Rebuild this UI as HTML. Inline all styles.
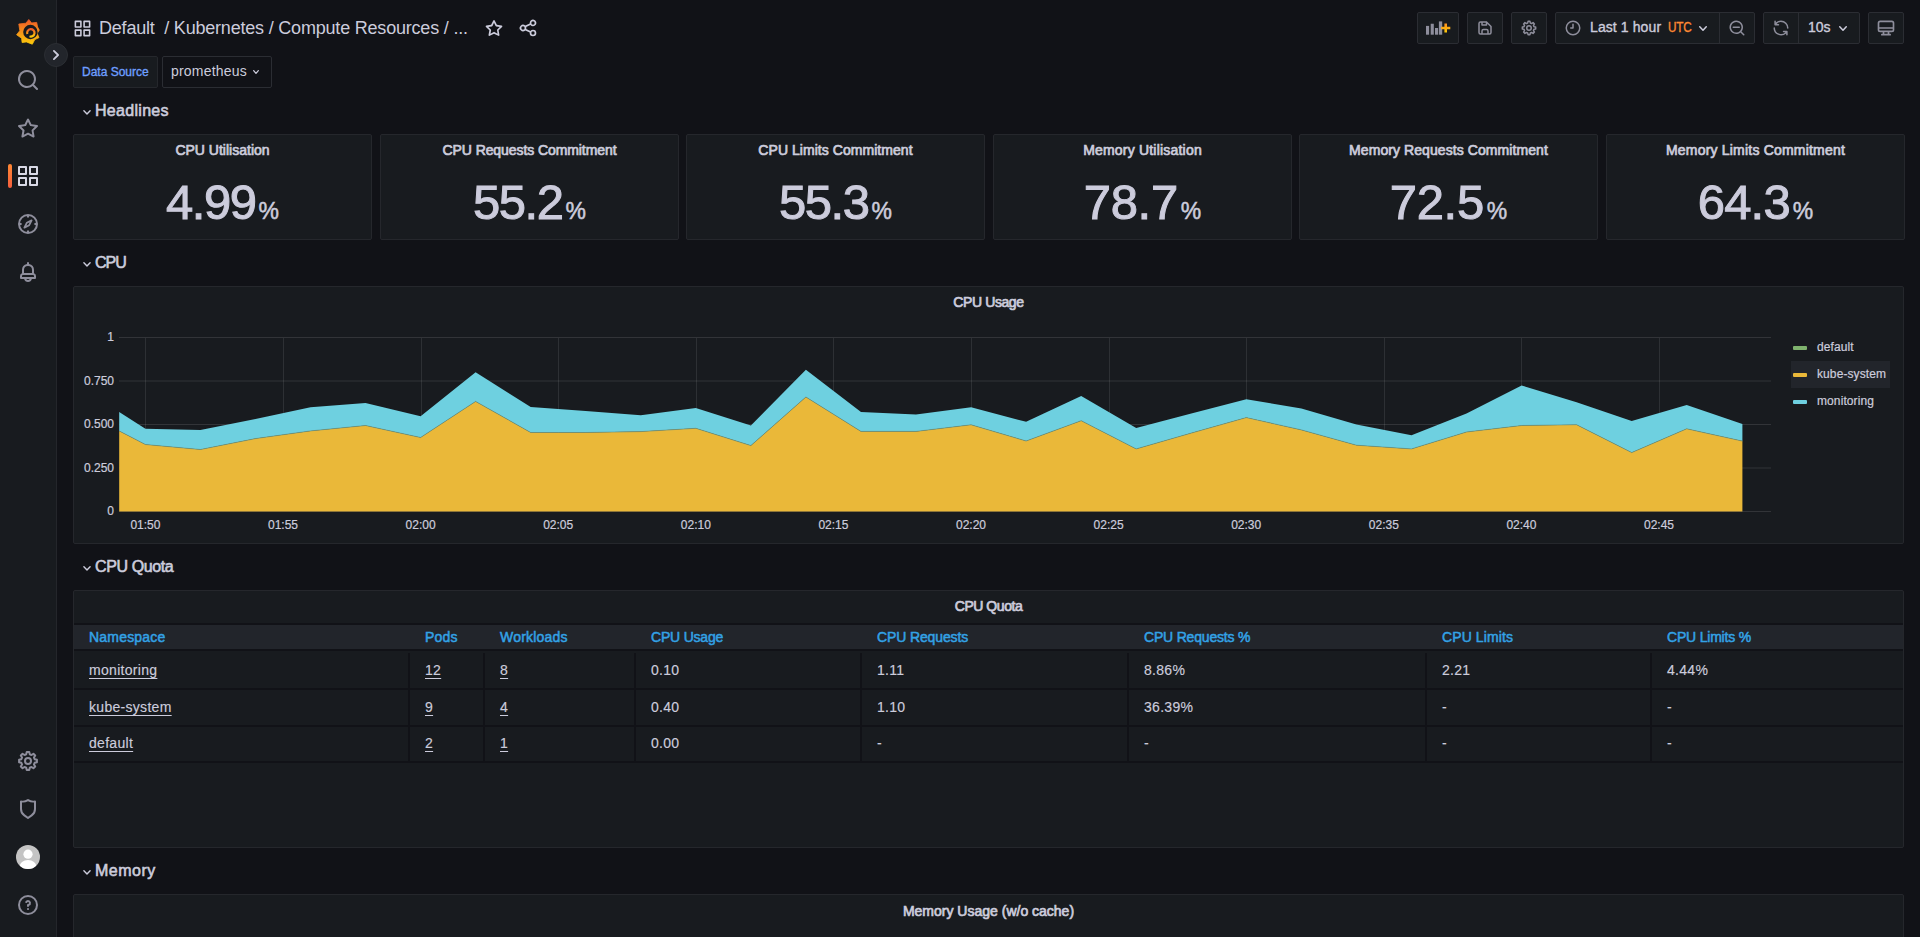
<!DOCTYPE html>
<html><head><meta charset="utf-8">
<style>
*{box-sizing:border-box;margin:0;padding:0}
html,body{width:1920px;height:937px;overflow:hidden;background:#111217;font-family:"Liberation Sans",sans-serif;color:#ccccdc}
svg{display:block}
.a{position:absolute}
#side{position:absolute;left:0;top:0;width:57px;height:937px;background:#181b1f;border-right:1px solid #24262b}
.si{position:absolute;left:16px;width:24px;height:24px;fill:#8e8e9c}
.btn{position:absolute;top:12px;height:32px;background:#181b1f;border:1px solid #2b2d33;border-radius:2px}
.tb{fill:#8e8e9c}
.panel{position:absolute;background:#181b1f;border:1px solid #25272c;border-radius:2px}
.pt{position:absolute;left:0;right:0;text-align:center;font-size:14px;color:#ccccdc;white-space:nowrap;-webkit-text-stroke:0.7px #ccccdc;letter-spacing:-0.15px}
.rowt{position:absolute;left:95px;font-size:16px;-webkit-text-stroke:0.6px #ccccdc;color:#ccccdc;line-height:20px;letter-spacing:0.1px}
.chev{position:absolute;left:82px;width:10px;height:10px}
.sv{position:absolute;left:0;right:0;text-align:center;white-space:nowrap;color:#ccccdc;-webkit-text-stroke:1px #ccccdc}
.sv .n{font-size:49px;letter-spacing:-1.5px}
.sv .u{font-size:23px;letter-spacing:0;-webkit-text-stroke:0.5px #ccccdc;margin-left:3px}
.th{font-size:14px;line-height:16px;-webkit-text-stroke:0.5px #33a2e5;color:#33a2e5;white-space:nowrap;letter-spacing:0.2px}
.td{font-size:14px;line-height:16px;color:#ccccdc;white-space:nowrap;letter-spacing:0.3px;-webkit-text-stroke:0.15px #ccccdc}
.lk{text-decoration:underline;text-underline-offset:3px}
.m{-webkit-text-stroke:0.35px #ccccdc}
</style></head><body>
<div id="side">
  <!-- grafana logo -->
  <svg class="a" style="left:16px;top:19px" width="24" height="26" viewBox="0 0 24 26">
    <defs><linearGradient id="lg" x1="0" y1="0" x2="0" y2="1"><stop offset="0" stop-color="#f05a28"/><stop offset="1" stop-color="#fbca0a"/></linearGradient></defs>
    <path fill="url(#lg)" stroke="url(#lg)" stroke-width="0.8" stroke-linejoin="round" d="M12.80 0.50 L15.60 3.90 L20.70 3.40 L21.60 8.00 L23.30 11.10 L21.20 14.40 L23.00 18.60 L18.80 20.60 L16.30 25.20 L10.30 22.90 L6.10 23.60 L5.60 19.20 L0.60 15.80 L3.80 11.70 L2.80 5.00 L9.90 4.20Z"/>
    <circle cx="14.4" cy="13" r="7.2" fill="#181b1f"/>
    <path fill="none" stroke="url(#lg)" stroke-width="2.2" d="M11.3 15 A3.7 3.7 0 1 1 13.5 17.3"/>
  </svg>
  <!-- search -->
  <svg class="si" style="top:68px" viewBox="0 0 24 24"><path d="M21.71,20.29,18,16.61A9,9,0,1,0,16.61,18l3.68,3.68a1,1,0,0,0,1.42,0A1,1,0,0,0,21.71,20.29ZM11,18a7,7,0,1,1,7-7A7,7,0,0,1,11,18Z"/></svg>
  <!-- star -->
  <svg class="si" style="top:116px" viewBox="0 0 24 24"><path d="M22,9.67A1,1,0,0,0,21.14,9l-5.69-.83L12.9,3a1,1,0,0,0-1.8,0L8.55,8.16,2.86,9a1,1,0,0,0-.81.68,1,1,0,0,0,.25,1l4.13,4-1,5.68A1,1,0,0,0,6.9,21.44L12,18.770l5.1,2.67a.93.93,0,0,0,.46.12,1,1,0,0,0,.59-.19,1,1,0,0,0,.4-1l-1-5.68,4.13-4A1,1,0,0,0,22,9.67Zm-6.15,4a1,1,0,0,0-.29.88l.72,4.2-3.760-2a1.060,1.060,0,0,0-.94,0l-3.76,2,.72-4.2a1,1,0,0,0-.29-.88l-3-3,4.21-.61a1,1,0,0,0,.76-.55L12,5.7l1.88,3.82a1,1,0,0,0,.76.55l4.21.61Z"/></svg>
  <!-- active bar -->
  <div class="a" style="left:8px;top:164px;width:4px;height:24px;border-radius:2px;background:linear-gradient(180deg,#ff8833,#f55f3e)"></div>
  <!-- apps -->
  <svg class="si" style="top:164px;fill:#d8d9e5" viewBox="0 0 24 24"><path d="M10,13H3a1,1,0,0,0-1,1v7a1,1,0,0,0,1,1h7a1,1,0,0,0,1-1V14A1,1,0,0,0,10,13ZM9,20H4V15H9ZM21,2H14a1,1,0,0,0-1,1v7a1,1,0,0,0,1,1h7a1,1,0,0,0,1-1V3A1,1,0,0,0,21,2ZM20,9H15V4h5Zm1,4H14a1,1,0,0,0-1,1v7a1,1,0,0,0,1,1h7a1,1,0,0,0,1-1V14A1,1,0,0,0,21,13Zm-1,7H15V15h5ZM10,2H3A1,1,0,0,0,2,3v7a1,1,0,0,0,1,1h7a1,1,0,0,0,1-1V3A1,1,0,0,0,10,2ZM9,9H4V4H9Z"/></svg>
  <!-- compass -->
  <svg class="si" style="top:212px" viewBox="0 0 24 24"><circle cx="12" cy="12" r="9" fill="none" stroke="#8e8e9c" stroke-width="2"/><path d="M12 3v2.6M12 18.4V21M3 12h2.6M18.4 12H21" stroke="#8e8e9c" stroke-width="2"/><path d="M15.6 8.4 L13.2 13.2 L8.4 15.6 L10.8 10.8Z" fill="none" stroke="#8e8e9c" stroke-width="1.8" stroke-linejoin="round"/></svg>
  <!-- bell -->
  <svg class="si" style="top:260px" viewBox="0 0 24 24"><path d="M18,13.18V10a6,6,0,0,0-5-5.91V3a1,1,0,0,0-2,0V4.09A6,6,0,0,0,6,10v3.18A3,3,0,0,0,4,16v2a1,1,0,0,0,1,1H8.14a4,4,0,0,0,7.72,0H19a1,1,0,0,0,1-1V16A3,3,0,0,0,18,13.18ZM8,10a4,4,0,0,1,8,0v3H8Zm4,10a2,2,0,0,1-1.72-1h3.44A2,2,0,0,1,12,20Zm6-3H6V16a1,1,0,0,1,1-1H17a1,1,0,0,1,1,1Z"/></svg>
  <!-- cog -->
  <svg class="si" style="top:749px" viewBox="0 0 24 24"><path fill="none" stroke="#8e8e9c" stroke-width="2" stroke-linejoin="round" d="M10.75 3.09 L13.25 3.09 L13.79 5.34 L15.45 6.02 L17.42 4.81 L19.19 6.58 L17.98 8.55 L18.66 10.21 L20.91 10.75 L20.91 13.25 L18.66 13.79 L17.98 15.45 L19.19 17.42 L17.42 19.19 L15.45 17.98 L13.79 18.66 L13.25 20.91 L10.75 20.91 L10.21 18.66 L8.55 17.98 L6.58 19.19 L4.81 17.42 L6.02 15.45 L5.34 13.79 L3.09 13.25 L3.09 10.75 L5.34 10.21 L6.02 8.55 L4.81 6.58 L6.58 4.81 L8.55 6.02 L10.21 5.34Z"/><circle cx="12" cy="12" r="3" fill="none" stroke="#8e8e9c" stroke-width="2"/></svg>
  <!-- shield -->
  <svg class="si" style="top:797px" viewBox="0 0 24 24"><path d="M19.63,3.65a1,1,0,0,0-.84-.2,8,8,0,0,1-6.22-1.27,1,1,0,0,0-1.14,0A8,8,0,0,1,5.21,3.45a1,1,0,0,0-.84.2A1,1,0,0,0,4,4.43v7.45a9,9,0,0,0,3.770,7.33l3.65,2.6a1,1,0,0,0,1.16,0l3.65-2.6A9,9,0,0,0,20,11.88V4.43A1,1,0,0,0,19.63,3.65ZM18,11.88a7,7,0,0,1-2.93,5.7L12,19.77,8.93,17.58A7,7,0,0,1,6,11.88V5.58a10,10,0,0,0,6-1.39,10,10,0,0,0,6,1.39Z"/></svg>
  <!-- avatar -->
  <svg class="a" style="left:16px;top:845px" width="24" height="24" viewBox="0 0 24 24"><defs><clipPath id="cc"><circle cx="12" cy="12" r="12"/></clipPath></defs><circle cx="12" cy="12" r="12" fill="#c4c4c4"/><g clip-path="url(#cc)" fill="#fff"><circle cx="12" cy="9.2" r="4.6"/><ellipse cx="12" cy="22" rx="8.5" ry="7"/></g></svg>
  <!-- help -->
  <svg class="si" style="top:893px" viewBox="0 0 24 24"><path d="M11.29,15.29a1.58,1.58,0,0,0-.12.15.76.76,0,0,0-.09.18.64.64,0,0,0-.06.18,1.36,1.36,0,0,0,0,.2.84.84,0,0,0,.08.38.9.9,0,0,0,.54.54.94.94,0,0,0,.76,0,.9.9,0,0,0,.54-.54A1,1,0,0,0,13,16a1,1,0,0,0-.29-.71A1,1,0,0,0,11.29,15.29ZM12,2A10,10,0,1,0,22,12,10,10,0,0,0,12,2Zm0,18a8,8,0,1,1,8-8A8,8,0,0,1,12,20ZM12,7A3,3,0,0,0,9.4,8.5a1,1,0,1,0,1.73,1A1,1,0,0,1,12,9a1,1,0,0,1,0,2,1,1,0,0,0-1,1v1a1,1,0,0,0,2,0v-.18A3,3,0,0,0,12,7Z"/></svg>
</div>
<!-- expand chevron -->
<div class="a" style="left:44px;top:43px;width:24px;height:24px;border-radius:50%;background:#22252b;border:1px solid #2b2e33"></div>
<svg class="a" style="left:52px;top:49px" width="8" height="12" viewBox="0 0 8 12"><polyline points="1.9,1.9 6.1,6 1.9,10.1" fill="none" stroke="#ccccdc" stroke-width="1.8" stroke-linecap="round" stroke-linejoin="round"/></svg>
<!-- TOP NAV -->
<svg class="a" style="left:72.5px;top:18.5px" width="19" height="19" viewBox="0 0 24 24"><path fill="#ccccdc" d="M10,13H3a1,1,0,0,0-1,1v7a1,1,0,0,0,1,1h7a1,1,0,0,0,1-1V14A1,1,0,0,0,10,13ZM9,20H4V15H9ZM21,2H14a1,1,0,0,0-1,1v7a1,1,0,0,0,1,1h7a1,1,0,0,0,1-1V3A1,1,0,0,0,21,2ZM20,9H15V4h5Zm1,4H14a1,1,0,0,0-1,1v7a1,1,0,0,0,1,1h7a1,1,0,0,0,1-1V14A1,1,0,0,0,21,13Zm-1,7H15V15h5ZM10,2H3A1,1,0,0,0,2,3v7a1,1,0,0,0,1,1h7a1,1,0,0,0,1-1V3A1,1,0,0,0,10,2ZM9,9H4V4H9Z"/></svg>
<div class="a" id="title" style="left:99px;top:17px;font-size:18px;line-height:22px;color:#ccccdc;white-space:nowrap;letter-spacing:-0.2px">Default &nbsp;/ Kubernetes / Compute Resources / ...</div>
<svg class="a" style="left:484px;top:18px" width="20" height="20" viewBox="0 0 24 24"><path fill="#ccccdc" d="M22,9.67A1,1,0,0,0,21.14,9l-5.69-.83L12.9,3a1,1,0,0,0-1.8,0L8.550,8.16,2.86,9a1,1,0,0,0-.81.68,1,1,0,0,0,.25,1l4.13,4-1,5.68A1,1,0,0,0,6.9,21.44L12,18.77l5.1,2.67a.93.93,0,0,0,.46.12,1,1,0,0,0,.59-.19,1,1,0,0,0,.4-1l-1-5.68,4.13-4A1,1,0,0,0,22,9.67Zm-6.15,4a1,1,0,0,0-.29.88l.72,4.2-3.76-2a1.06,1.06,0,0,0-.94,0l-3.76,2,.72-4.2a1,1,0,0,0-.29-.88l-3-3,4.21-.61a1,1,0,0,0,.76-.55L12,5.7l1.88,3.82a1,1,0,0,0,.76.55l4.21.61Z"/></svg>
<svg class="a" style="left:518px;top:18px" width="20" height="20" viewBox="0 0 24 24"><path fill="#ccccdc" d="M18,14a4,4,0,0,0-3.08,1.48l-5.1-2.35a3.64,3.64,0,0,0,0-2.26l5.1-2.35A4,4,0,1,0,14,6a4.17,4.17,0,0,0,.07.71L8.79,9.14a4,4,0,1,0,0,5.72l5.28,2.43A4.17,4.17,0,0,0,14,18a4,4,0,1,0,4-4ZM18,4a2,2,0,1,1-2,2A2,2,0,0,1,18,4ZM6,14a2,2,0,1,1,2-2A2,2,0,0,1,6,14Zm12,6a2,2,0,1,1,2-2A2,2,0,0,1,18,20Z"/></svg>

<!-- right toolbar -->
<div class="btn" style="left:1417px;width:42px"></div>
<svg class="a" style="left:1424px;top:19px" width="28" height="18" viewBox="0 0 28 18">
  <defs><linearGradient id="pg" x1="0" y1="0" x2="0" y2="1"><stop offset="0" stop-color="#ff8f1f"/><stop offset="1" stop-color="#fbca0a"/></linearGradient></defs>
  <g fill="#8e8e9c"><rect x="2" y="6.9" width="3.1" height="8.8"/><rect x="6.7" y="4.75" width="3.1" height="10.95"/><rect x="11" y="9" width="3.1" height="6.7"/><rect x="14.9" y="2.4" width="3.3" height="13.3"/></g>
  <path d="M21.7 4.4v9.2M17.1 9h9.2" stroke="url(#pg)" stroke-width="2.6"/>
</svg>
<div class="btn" style="left:1467px;width:36px"></div>
<svg class="a" style="left:1476px;top:19px" width="18" height="18" viewBox="0 0 24 24"><path fill="#8e8e9c" d="M20.71,9.29l-6-6a1,1,0,0,0-.32-.21A1.09,1.09,0,0,0,14,3H6A3,3,0,0,0,3,6V18a3,3,0,0,0,3,3H18a3,3,0,0,0,3-3V10A1,1,0,0,0,20.71,9.29ZM9,5h4V7H9Zm6,14H9V16a1,1,0,0,1,1-1h4a1,1,0,0,1,1,1Zm4-1a1,1,0,0,1-1,1H17V16a3,3,0,0,0-3-3H10a3,3,0,0,0-3,3v3H6a1,1,0,0,1-1-1V6A1,1,0,0,1,6,5H7V8A1,1,0,0,0,8,9h6a1,1,0,0,0,1-1V6.41l4,4Z"/></svg>
<div class="btn" style="left:1511px;width:36px"></div>
<svg class="a" style="left:1520px;top:19px" width="18" height="18" viewBox="0 0 24 24"><path fill="none" stroke="#8e8e9c" stroke-width="2" stroke-linejoin="round" d="M10.75 3.09 L13.25 3.09 L13.79 5.34 L15.45 6.02 L17.42 4.81 L19.19 6.58 L17.98 8.55 L18.66 10.21 L20.91 10.75 L20.91 13.25 L18.66 13.79 L17.98 15.45 L19.19 17.42 L17.42 19.19 L15.45 17.98 L13.79 18.66 L13.25 20.91 L10.75 20.91 L10.21 18.66 L8.55 17.98 L6.58 19.19 L4.81 17.42 L6.02 15.45 L5.34 13.79 L3.09 13.25 L3.09 10.75 L5.34 10.21 L6.02 8.55 L4.81 6.58 L6.58 4.81 L8.55 6.02 L10.21 5.34Z"/><circle cx="12" cy="12" r="3" fill="none" stroke="#8e8e9c" stroke-width="2"/></svg>

<div class="btn" style="left:1555px;width:200px"></div>
<div class="a" style="left:1719px;top:13px;width:1px;height:30px;background:#2b2d33"></div>
<svg class="a" style="left:1564px;top:19px" width="18" height="18" viewBox="0 0 24 24"><path fill="#8e8e9c" d="M12,2A10,10,0,1,0,22,12,10,10,0,0,0,12,2Zm0,18a8,8,0,1,1,8-8A8,8,0,0,1,12,20Zm0-14a1,1,0,0,0-1,1v4H9a1,1,0,0,0,0,2h3a1,1,0,0,0,1-1V7A1,1,0,0,0,12,6Z"/></svg>
<div class="a m" style="left:1590px;top:19px;font-size:14px;line-height:17px;color:#ccccdc;white-space:nowrap;letter-spacing:0.1px">Last 1 hour</div>
<div class="a m" style="left:1668px;top:19px;font-size:14px;line-height:17px;color:#ff8833;-webkit-text-stroke-color:#ff8833;white-space:nowrap;letter-spacing:-0.2px;transform:scaleX(0.84);transform-origin:0 0">UTC</div>
<svg class="a" style="left:1698px;top:25px" width="10" height="7" viewBox="0 0 10 7"><polyline points="1.75,1.75 5.0,5.25 8.25,1.75" fill="none" stroke="#ccccdc" stroke-width="1.5" stroke-linecap="round" stroke-linejoin="round"/></svg>
<svg class="a" style="left:1728px;top:19px" width="18" height="18" viewBox="0 0 24 24"><path fill="#8e8e9c" d="M21.71,20.29,18,16.61A9,9,0,1,0,16.61,18l3.68,3.68a1,1,0,0,0,1.42,0A1,1,0,0,0,21.71,20.29ZM11,18a7,7,0,1,1,7-7A7,7,0,0,1,11,18Zm4-8H7a1,1,0,0,0,0,2h8a1,1,0,0,0,0-2Z"/></svg>

<div class="btn" style="left:1763px;width:97px"></div>
<div class="a" style="left:1798px;top:13px;width:1px;height:30px;background:#2b2d33"></div>
<svg class="a" style="left:1772px;top:19px" width="18" height="18" viewBox="0 0 24 24"><path fill="#8e8e9c" d="M19.91,15.51H15.38a1,1,0,0,0,0,2h2.4A8,8,0,0,1,4,12a1,1,0,0,0-2,0,10,10,0,0,0,16.88,7.23V21a1,1,0,0,0,2,0V16.5A1,1,0,0,0,19.910,15.51ZM12,2A10,10,0,0,0,5.12,4.77V3a1,1,0,0,0-2,0V7.5a1,1,0,0,0,1,1h4.5a1,1,0,0,0,0-2H6.22A8,8,0,0,1,20,12a1,1,0,0,0,2,0A10,10,0,0,0,12,2Z"/></svg>
<div class="a m" style="left:1808px;top:19px;font-size:14px;line-height:17px;color:#ccccdc;letter-spacing:0px">10s</div>
<svg class="a" style="left:1838px;top:25px" width="10" height="7" viewBox="0 0 10 7"><polyline points="1.75,1.75 5.0,5.25 8.25,1.75" fill="none" stroke="#ccccdc" stroke-width="1.5" stroke-linecap="round" stroke-linejoin="round"/></svg>

<div class="btn" style="left:1868px;width:36px"></div>
<svg class="a" style="left:1876px;top:18px" width="20" height="20" viewBox="0 0 24 24"><path fill="#8e8e9c" d="M19,3H5A3,3,0,0,0,2,6v8a3,3,0,0,0,3,3H8v2H7a1,1,0,0,0,0,2H17a1,1,0,0,0,0-2H16V17h3a3,3,0,0,0,3-3V6A3,3,0,0,0,19,3ZM14,19H10V17h4Zm6-5a1,1,0,0,1-1,1H5a1,1,0,0,1-1-1V13H20Zm0-3H4V6A1,1,0,0,1,5,5H19a1,1,0,0,1,1,1Z"/></svg>

<!-- submenu -->
<div class="a" style="left:73px;top:56px;width:85px;height:32px;background:#181b1f;border:1px solid #25272c;border-radius:2px"></div>
<div class="a m" style="left:82px;top:65px;font-size:12px;line-height:14px;color:#6e9fff;-webkit-text-stroke-color:#6e9fff;white-space:nowrap;letter-spacing:0px">Data Source</div>
<div class="a" style="left:162px;top:56px;width:110px;height:32px;background:#111217;border:1px solid #2b2d33;border-radius:2px"></div>
<div class="a" style="left:171px;top:63px;font-size:14px;line-height:16px;color:#ccccdc;white-space:nowrap;letter-spacing:0.2px">prometheus</div>
<svg class="a" style="left:252px;top:69px" width="8" height="6" viewBox="0 0 8 6"><polyline points="1.65,1.65 4.0,4.35 6.35,1.65" fill="none" stroke="#ccccdc" stroke-width="1.3" stroke-linecap="round" stroke-linejoin="round"/></svg>
<svg class="a" style="left:82px;top:109px" width="10" height="7" viewBox="0 0 10 7"><polyline points="1.9,1.8 5,5 8.1,1.8" fill="none" stroke="#ccccdc" stroke-width="1.4" stroke-linecap="round" stroke-linejoin="round"/></svg>
<div class="rowt" style="top:100.5px;letter-spacing:0.3px">Headlines</div>
<svg class="a" style="left:82px;top:261px" width="10" height="7" viewBox="0 0 10 7"><polyline points="1.9,1.8 5,5 8.1,1.8" fill="none" stroke="#ccccdc" stroke-width="1.4" stroke-linecap="round" stroke-linejoin="round"/></svg>
<div class="rowt" style="top:252.5px;letter-spacing:-1.0px">CPU</div>
<svg class="a" style="left:82px;top:565px" width="10" height="7" viewBox="0 0 10 7"><polyline points="1.9,1.8 5,5 8.1,1.8" fill="none" stroke="#ccccdc" stroke-width="1.4" stroke-linecap="round" stroke-linejoin="round"/></svg>
<div class="rowt" style="top:556.5px;letter-spacing:-0.4px">CPU Quota</div>
<svg class="a" style="left:82px;top:869px" width="10" height="7" viewBox="0 0 10 7"><polyline points="1.9,1.8 5,5 8.1,1.8" fill="none" stroke="#ccccdc" stroke-width="1.4" stroke-linecap="round" stroke-linejoin="round"/></svg>
<div class="rowt" style="top:860.5px;letter-spacing:0.5px">Memory</div>
<div class="panel" style="left:73px;top:134px;width:299px;height:106px"><div class="pt" style="top:7.2px;line-height:16px;letter-spacing:0px">CPU Utilisation</div><div class="sv" style="top:38.7px;line-height:56px"><span class="n" style="letter-spacing:-1.5px">4.99</span><span class="u">%</span></div></div>
<div class="panel" style="left:380px;top:134px;width:299px;height:106px"><div class="pt" style="top:7.2px;line-height:16px;letter-spacing:-0.08px">CPU Requests Commitment</div><div class="sv" style="top:38.7px;line-height:56px"><span class="n" style="letter-spacing:-1.5px">55.2</span><span class="u">%</span></div></div>
<div class="panel" style="left:686px;top:134px;width:299px;height:106px"><div class="pt" style="top:7.2px;line-height:16px;letter-spacing:0.05px">CPU Limits Commitment</div><div class="sv" style="top:38.7px;line-height:56px"><span class="n" style="letter-spacing:-1.5px">55.3</span><span class="u">%</span></div></div>
<div class="panel" style="left:993px;top:134px;width:299px;height:106px"><div class="pt" style="top:7.2px;line-height:16px;letter-spacing:0.2px">Memory Utilisation</div><div class="sv" style="top:38.7px;line-height:56px"><span class="n" style="letter-spacing:-0.3px">78.7</span><span class="u">%</span></div></div>
<div class="panel" style="left:1299px;top:134px;width:299px;height:106px"><div class="pt" style="top:7.2px;line-height:16px;letter-spacing:0.08px">Memory Requests Commitment</div><div class="sv" style="top:38.7px;line-height:56px"><span class="n" style="letter-spacing:-0.3px">72.5</span><span class="u">%</span></div></div>
<div class="panel" style="left:1606px;top:134px;width:299px;height:106px"><div class="pt" style="top:7.2px;line-height:16px;letter-spacing:0.2px">Memory Limits Commitment</div><div class="sv" style="top:38.7px;line-height:56px"><span class="n" style="letter-spacing:-0.8px">64.3</span><span class="u">%</span></div></div>
<div class="panel" style="left:73px;top:286px;width:1831px;height:258px"><div class="pt" style="top:7px;line-height:16px;letter-spacing:-0.4px">CPU Usage</div></div>
<svg class="a" style="left:0;top:0" width="1920" height="937" viewBox="0 0 1920 937">
<line x1="119" y1="337.5" x2="1771" y2="337.5" stroke="rgba(255,255,255,0.115)" stroke-width="1"/>
<line x1="119" y1="381" x2="1771" y2="381" stroke="rgba(255,255,255,0.115)" stroke-width="1"/>
<line x1="119" y1="424.5" x2="1771" y2="424.5" stroke="rgba(255,255,255,0.115)" stroke-width="1"/>
<line x1="119" y1="468" x2="1771" y2="468" stroke="rgba(255,255,255,0.115)" stroke-width="1"/>
<line x1="119" y1="511.5" x2="1771" y2="511.5" stroke="rgba(255,255,255,0.115)" stroke-width="1"/>
<line x1="145.5" y1="338" x2="145.5" y2="511" stroke="rgba(255,255,255,0.095)" stroke-width="1"/>
<line x1="283.5" y1="338" x2="283.5" y2="511" stroke="rgba(255,255,255,0.095)" stroke-width="1"/>
<line x1="421.5" y1="338" x2="421.5" y2="511" stroke="rgba(255,255,255,0.095)" stroke-width="1"/>
<line x1="558.5" y1="338" x2="558.5" y2="511" stroke="rgba(255,255,255,0.095)" stroke-width="1"/>
<line x1="696.5" y1="338" x2="696.5" y2="511" stroke="rgba(255,255,255,0.095)" stroke-width="1"/>
<line x1="833.5" y1="338" x2="833.5" y2="511" stroke="rgba(255,255,255,0.095)" stroke-width="1"/>
<line x1="971.5" y1="338" x2="971.5" y2="511" stroke="rgba(255,255,255,0.095)" stroke-width="1"/>
<line x1="1109.5" y1="338" x2="1109.5" y2="511" stroke="rgba(255,255,255,0.095)" stroke-width="1"/>
<line x1="1246.5" y1="338" x2="1246.5" y2="511" stroke="rgba(255,255,255,0.095)" stroke-width="1"/>
<line x1="1384.5" y1="338" x2="1384.5" y2="511" stroke="rgba(255,255,255,0.095)" stroke-width="1"/>
<line x1="1521.5" y1="338" x2="1521.5" y2="511" stroke="rgba(255,255,255,0.095)" stroke-width="1"/>
<line x1="1659.5" y1="338" x2="1659.5" y2="511" stroke="rgba(255,255,255,0.095)" stroke-width="1"/>
<polygon points="119.2,411.9 145.4,428.8 200.4,430.1 255.5,419.1 310.5,407.3 365.5,402.9 420.6,416.3 475.6,372.3 530.7,406.9 585.7,411.0 640.8,415.2 695.8,408.0 750.9,425.5 805.9,369.7 861.0,411.9 916.0,414.5 971.1,407.3 1026.1,421.8 1081.2,395.9 1136.2,428.1 1191.3,413.4 1246.3,399.2 1301.4,408.6 1356.4,424.4 1411.5,435.3 1466.5,413.4 1521.6,385.4 1576.6,402.2 1631.7,421.0 1686.7,405.1 1742.4,424.1 1742.4,441.1 1686.7,428.8 1631.7,452.6 1576.6,424.7 1521.6,425.5 1466.5,432.0 1411.5,448.9 1356.4,445.2 1301.4,429.9 1246.3,417.6 1191.3,433.1 1136.2,448.9 1081.2,420.7 1026.1,441.0 971.1,424.8 916.0,431.4 861.0,431.4 805.9,397.0 750.9,445.6 695.8,428.3 640.8,431.6 585.7,432.5 530.7,432.5 475.6,401.4 420.6,437.5 365.5,425.5 310.5,430.9 255.5,438.6 200.4,449.5 145.4,444.5 119.2,430.9" fill="#6ed0e0"/>
<polygon points="119.2,430.9 145.4,444.5 200.4,449.5 255.5,438.6 310.5,430.9 365.5,425.5 420.6,437.5 475.6,401.4 530.7,432.5 585.7,432.5 640.8,431.6 695.8,428.3 750.9,445.6 805.9,397.0 861.0,431.4 916.0,431.4 971.1,424.8 1026.1,441.0 1081.2,420.7 1136.2,448.9 1191.3,433.1 1246.3,417.6 1301.4,429.9 1356.4,445.2 1411.5,448.9 1466.5,432.0 1521.6,425.5 1576.6,424.7 1631.7,452.6 1686.7,428.8 1742.4,441.1 1742.4,511.5 119.2,511.5" fill="#eab839"/>
<polyline points="119.2,430.9 145.4,444.5 200.4,449.5 255.5,438.6 310.5,430.9 365.5,425.5 420.6,437.5 475.6,401.4 530.7,432.5 585.7,432.5 640.8,431.6 695.8,428.3 750.9,445.6 805.9,397.0 861.0,431.4 916.0,431.4 971.1,424.8 1026.1,441.0 1081.2,420.7 1136.2,448.9 1191.3,433.1 1246.3,417.6 1301.4,429.9 1356.4,445.2 1411.5,448.9 1466.5,432.0 1521.6,425.5 1576.6,424.7 1631.7,452.6 1686.7,428.8 1742.4,441.1" fill="none" stroke="#5a8f8a" stroke-width="0.6"/>
<text x="114" y="341.0" text-anchor="end" font-family="Liberation Sans" font-size="12" fill="#ccccdc" stroke="#ccccdc" stroke-width="0.2">1</text>
<text x="114" y="384.5" text-anchor="end" font-family="Liberation Sans" font-size="12" fill="#ccccdc" stroke="#ccccdc" stroke-width="0.2">0.750</text>
<text x="114" y="428.0" text-anchor="end" font-family="Liberation Sans" font-size="12" fill="#ccccdc" stroke="#ccccdc" stroke-width="0.2">0.500</text>
<text x="114" y="471.5" text-anchor="end" font-family="Liberation Sans" font-size="12" fill="#ccccdc" stroke="#ccccdc" stroke-width="0.2">0.250</text>
<text x="114" y="515.0" text-anchor="end" font-family="Liberation Sans" font-size="12" fill="#ccccdc" stroke="#ccccdc" stroke-width="0.2">0</text>
<text x="145.4" y="529" text-anchor="middle" font-family="Liberation Sans" font-size="12" fill="#ccccdc" stroke="#ccccdc" stroke-width="0.2">01:50</text>
<text x="283.0" y="529" text-anchor="middle" font-family="Liberation Sans" font-size="12" fill="#ccccdc" stroke="#ccccdc" stroke-width="0.2">01:55</text>
<text x="420.6" y="529" text-anchor="middle" font-family="Liberation Sans" font-size="12" fill="#ccccdc" stroke="#ccccdc" stroke-width="0.2">02:00</text>
<text x="558.2" y="529" text-anchor="middle" font-family="Liberation Sans" font-size="12" fill="#ccccdc" stroke="#ccccdc" stroke-width="0.2">02:05</text>
<text x="695.8" y="529" text-anchor="middle" font-family="Liberation Sans" font-size="12" fill="#ccccdc" stroke="#ccccdc" stroke-width="0.2">02:10</text>
<text x="833.4" y="529" text-anchor="middle" font-family="Liberation Sans" font-size="12" fill="#ccccdc" stroke="#ccccdc" stroke-width="0.2">02:15</text>
<text x="971.0" y="529" text-anchor="middle" font-family="Liberation Sans" font-size="12" fill="#ccccdc" stroke="#ccccdc" stroke-width="0.2">02:20</text>
<text x="1108.6" y="529" text-anchor="middle" font-family="Liberation Sans" font-size="12" fill="#ccccdc" stroke="#ccccdc" stroke-width="0.2">02:25</text>
<text x="1246.2" y="529" text-anchor="middle" font-family="Liberation Sans" font-size="12" fill="#ccccdc" stroke="#ccccdc" stroke-width="0.2">02:30</text>
<text x="1383.8" y="529" text-anchor="middle" font-family="Liberation Sans" font-size="12" fill="#ccccdc" stroke="#ccccdc" stroke-width="0.2">02:35</text>
<text x="1521.4" y="529" text-anchor="middle" font-family="Liberation Sans" font-size="12" fill="#ccccdc" stroke="#ccccdc" stroke-width="0.2">02:40</text>
<text x="1659.0" y="529" text-anchor="middle" font-family="Liberation Sans" font-size="12" fill="#ccccdc" stroke="#ccccdc" stroke-width="0.2">02:45</text>
<rect x="1791" y="361" width="99" height="27" fill="#22252b"/>
<rect x="1793" y="346" width="14" height="4" rx="1" fill="#7eb26d"/>
<text x="1817" y="351" font-family="Liberation Sans" font-size="12" fill="#ccccdc" letter-spacing="0.1" stroke="#ccccdc" stroke-width="0.2">default</text>
<rect x="1793" y="373" width="14" height="4" rx="1" fill="#eab839"/>
<text x="1817" y="378" font-family="Liberation Sans" font-size="12" fill="#ccccdc" letter-spacing="0.1" stroke="#ccccdc" stroke-width="0.2">kube-system</text>
<rect x="1793" y="400" width="14" height="4" rx="1" fill="#6ed0e0"/>
<text x="1817" y="405" font-family="Liberation Sans" font-size="12" fill="#ccccdc" letter-spacing="0.1" stroke="#ccccdc" stroke-width="0.2">monitoring</text>
</svg>
<div class="panel" style="left:73px;top:590px;width:1831px;height:258px"><div class="pt" style="top:7px;line-height:16px;letter-spacing:-0.45px">CPU Quota</div></div>
<div class="a" style="left:74px;top:623px;width:1829px;height:2px;background:#111217"></div>
<div class="a" style="left:74px;top:625px;width:1829px;height:24px;background:#22252b"></div>
<div class="a" style="left:74px;top:649px;width:1829px;height:2px;background:#111217"></div>
<div class="a th" style="left:89px;top:629px;letter-spacing:0.2px">Namespace</div>
<div class="a th" style="left:425px;top:629px;letter-spacing:0.2px">Pods</div>
<div class="a th" style="left:500px;top:629px;letter-spacing:0.2px">Workloads</div>
<div class="a th" style="left:651px;top:629px;letter-spacing:-0.2px">CPU Usage</div>
<div class="a th" style="left:877px;top:629px;letter-spacing:-0.12px">CPU Requests</div>
<div class="a th" style="left:1144px;top:629px;letter-spacing:-0.19px">CPU Requests %</div>
<div class="a th" style="left:1442px;top:629px;letter-spacing:0.1px">CPU Limits</div>
<div class="a th" style="left:1667px;top:629px;letter-spacing:-0.2px">CPU Limits %</div>
<div class="a" style="left:74px;top:688px;width:1829px;height:2px;background:#111217"></div>
<div class="a td lk" style="left:89px;top:661.85px">monitoring</div>
<div class="a" style="left:408px;top:653px;width:2px;height:35px;background:#111217"></div>
<div class="a td lk" style="left:425px;top:661.85px">12</div>
<div class="a" style="left:483px;top:653px;width:2px;height:35px;background:#111217"></div>
<div class="a td lk" style="left:500px;top:661.85px">8</div>
<div class="a" style="left:634px;top:653px;width:2px;height:35px;background:#111217"></div>
<div class="a td" style="left:651px;top:661.85px">0.10</div>
<div class="a" style="left:860px;top:653px;width:2px;height:35px;background:#111217"></div>
<div class="a td" style="left:877px;top:661.85px">1.11</div>
<div class="a" style="left:1127px;top:653px;width:2px;height:35px;background:#111217"></div>
<div class="a td" style="left:1144px;top:661.85px">8.86%</div>
<div class="a" style="left:1425px;top:653px;width:2px;height:35px;background:#111217"></div>
<div class="a td" style="left:1442px;top:661.85px">2.21</div>
<div class="a" style="left:1650px;top:653px;width:2px;height:35px;background:#111217"></div>
<div class="a td" style="left:1667px;top:661.85px">4.44%</div>
<div class="a" style="left:74px;top:725px;width:1829px;height:2px;background:#111217"></div>
<div class="a td lk" style="left:89px;top:699.25px">kube-system</div>
<div class="a" style="left:408px;top:690px;width:2px;height:35px;background:#111217"></div>
<div class="a td lk" style="left:425px;top:699.25px">9</div>
<div class="a" style="left:483px;top:690px;width:2px;height:35px;background:#111217"></div>
<div class="a td lk" style="left:500px;top:699.25px">4</div>
<div class="a" style="left:634px;top:690px;width:2px;height:35px;background:#111217"></div>
<div class="a td" style="left:651px;top:699.25px">0.40</div>
<div class="a" style="left:860px;top:690px;width:2px;height:35px;background:#111217"></div>
<div class="a td" style="left:877px;top:699.25px">1.10</div>
<div class="a" style="left:1127px;top:690px;width:2px;height:35px;background:#111217"></div>
<div class="a td" style="left:1144px;top:699.25px">36.39%</div>
<div class="a" style="left:1425px;top:690px;width:2px;height:35px;background:#111217"></div>
<div class="a td" style="left:1442px;top:699.25px">-</div>
<div class="a" style="left:1650px;top:690px;width:2px;height:35px;background:#111217"></div>
<div class="a td" style="left:1667px;top:699.25px">-</div>
<div class="a" style="left:74px;top:761px;width:1829px;height:2px;background:#111217"></div>
<div class="a td lk" style="left:89px;top:735.15px">default</div>
<div class="a" style="left:408px;top:727px;width:2px;height:34px;background:#111217"></div>
<div class="a td lk" style="left:425px;top:735.15px">2</div>
<div class="a" style="left:483px;top:727px;width:2px;height:34px;background:#111217"></div>
<div class="a td lk" style="left:500px;top:735.15px">1</div>
<div class="a" style="left:634px;top:727px;width:2px;height:34px;background:#111217"></div>
<div class="a td" style="left:651px;top:735.15px">0.00</div>
<div class="a" style="left:860px;top:727px;width:2px;height:34px;background:#111217"></div>
<div class="a td" style="left:877px;top:735.15px">-</div>
<div class="a" style="left:1127px;top:727px;width:2px;height:34px;background:#111217"></div>
<div class="a td" style="left:1144px;top:735.15px">-</div>
<div class="a" style="left:1425px;top:727px;width:2px;height:34px;background:#111217"></div>
<div class="a td" style="left:1442px;top:735.15px">-</div>
<div class="a" style="left:1650px;top:727px;width:2px;height:34px;background:#111217"></div>
<div class="a td" style="left:1667px;top:735.15px">-</div>
<div class="panel" style="left:73px;top:894px;width:1831px;height:258px"><div class="pt" style="top:7.5px;line-height:16px;letter-spacing:0px">Memory Usage (w/o cache)</div></div></body></html>
